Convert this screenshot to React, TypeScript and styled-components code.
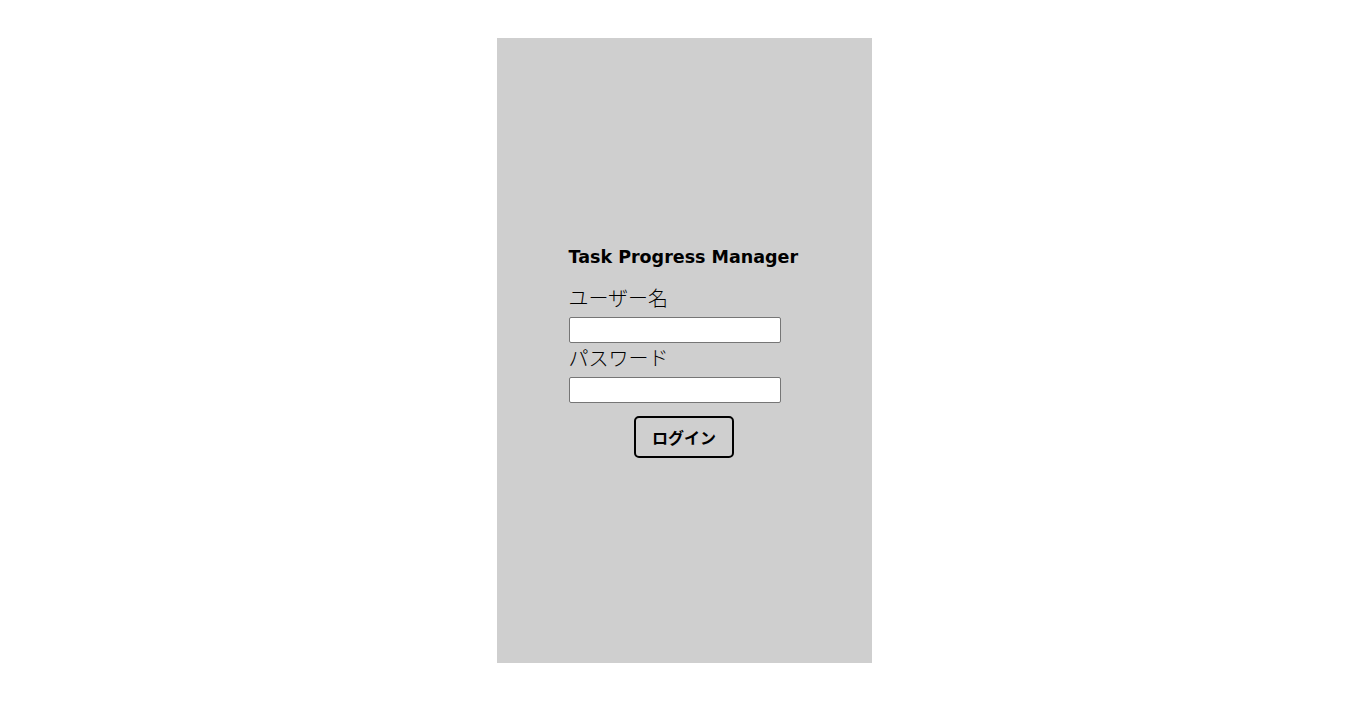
import { createGlobalStyle } from "styled-components";
import styled from "styled-components";

const GlobalStyle = createGlobalStyle`
  body {
    margin: 0;
    background: #ffffff;
    font-family: "DejaVu Sans", "Noto Sans CJK JP", sans-serif;
  }
`;

const Page = styled.div`
  display: flex;
  justify-content: center;
  padding: 38px 0 0 17px;
`;

const Panel = styled.div`
  width: 375px;
  height: 625px;
  background: #cfcfcf;
  display: flex;
  align-items: center;
  justify-content: center;
`;

const Form = styled.form`
  display: flex;
  flex-direction: column;
  width: 231px;
  margin-left: -1px;
`;

const Title = styled.h1`
  margin: 0 0 14px;
  font-size: 17.5px;
  font-weight: bold;
  color: #000;
  line-height: 28px;
  white-space: nowrap;
`;

const Label = styled.label`
  font-size: 20px;
  line-height: 26px;
  padding-bottom: 4px;
  color: #000;
  font-family: "Noto Sans CJK JP", sans-serif;
  font-weight: 300;
`;

const Input = styled.input`
  box-sizing: border-box;
  width: 212px;
  height: 26px;
  margin: 2px 0;
  border: 1px solid #767676;
  border-radius: 2px;
  background: #fff;
  padding: 1px 2px;
`;

const Button = styled.button`
  align-self: center;
  margin-top: 11px;
  width: 100px;
  height: 42px;
  border: 2px solid #000;
  border-radius: 5px;
  background: #cfcfcf;
  font-size: 16px;
  font-weight: bold;
  font-family: "Noto Sans CJK JP", sans-serif;
  color: #000;
`;

export default function App() {
  return (
    <>
      <GlobalStyle />
      <Page>
        <Panel>
          <Form onSubmit={(e) => e.preventDefault()}>
            <Title>Task Progress Manager</Title>
            <Label htmlFor="username">ユーザー名</Label>
            <Input id="username" type="text" />
            <Label htmlFor="password">パスワード</Label>
            <Input id="password" type="password" />
            <Button type="submit">ログイン</Button>
          </Form>
        </Panel>
      </Page>
    </>
  );
}
